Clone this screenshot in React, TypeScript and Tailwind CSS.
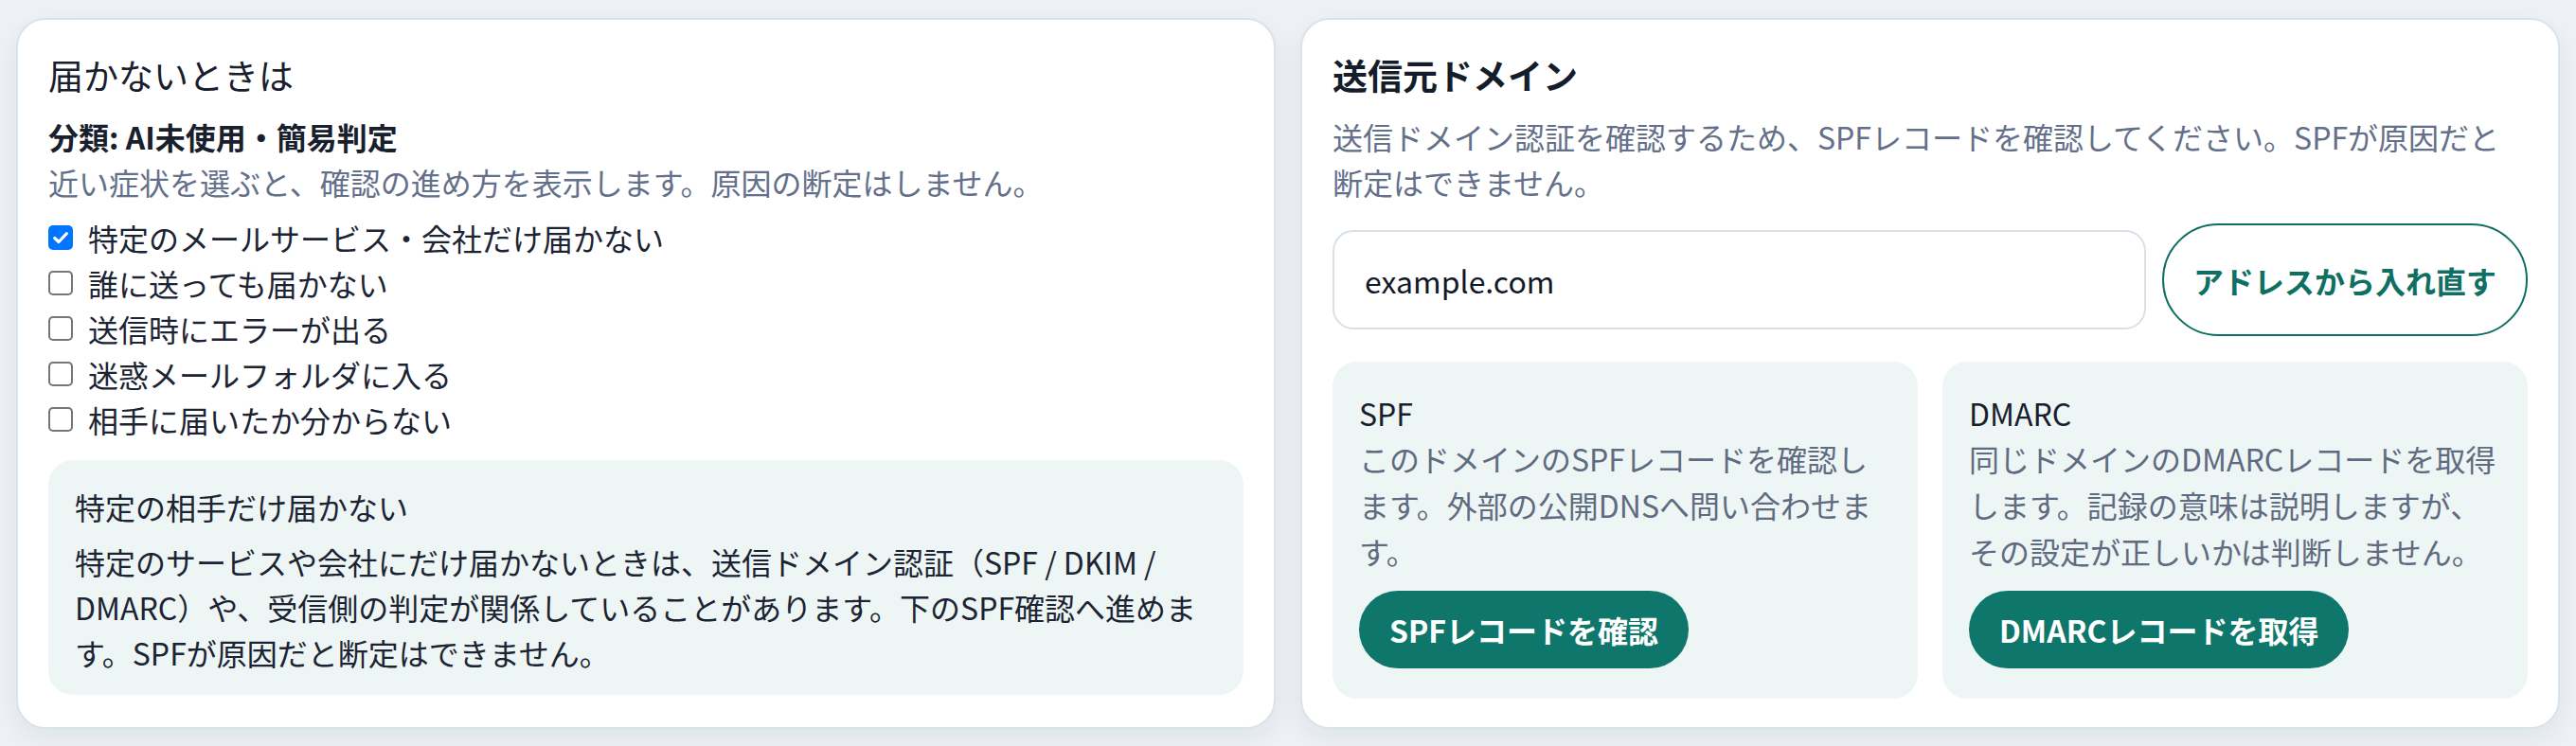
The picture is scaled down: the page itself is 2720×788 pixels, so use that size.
import React, { useState } from "react";

const FONT = { fontFamily: '"Noto Sans CJK JP", "Noto Sans", sans-serif' };

function Check({ label, checked, onToggle }: { label: string; checked: boolean; onToggle: () => void }) {
  return (
    <label className="flex h-[48px] cursor-pointer items-center gap-[16px]" onClick={onToggle}>
      {checked ? (
        <span className="flex h-[26px] w-[26px] flex-none items-center justify-center rounded-[5px] bg-[#0075ff]">
          <svg viewBox="0 0 16 16" className="h-[20px] w-[20px]" fill="none">
            <path d="M3 8.4 L6.4 11.6 L13 4.6" stroke="#ffffff" strokeWidth="2.6" strokeLinecap="round" strokeLinejoin="round" />
          </svg>
        </span>
      ) : (
        <span className="h-[26px] w-[26px] flex-none rounded-[5px] border-2 border-[#767676] bg-white" />
      )}
      <span className="text-[32px] leading-[48px] text-[#1c2433]">{label}</span>
    </label>
  );
}

export default function App() {
  const items = [
    "特定のメールサービス・会社だけ届かない",
    "誰に送っても届かない",
    "送信時にエラーが出る",
    "迷惑メールフォルダに入る",
    "相手に届いたか分からない",
  ];
  const [checked, setChecked] = useState<boolean[]>([true, false, false, false, false]);
  const [domain, setDomain] = useState("example.com");

  return (
    <div className="min-h-[788px] bg-[#eef2f6]" style={FONT}>
      <div className="grid grid-cols-2 items-stretch gap-[26px] px-[17px] pt-[19px]">
        {/* Left card */}
        <section className="rounded-[31px] border-2 border-[#d9e3eb] bg-white px-[32px] pb-[32px] pt-[32px] shadow-[0_10px_30px_rgba(15,23,42,0.07)]">
          <h2 className="text-[37px] font-normal leading-[52px] text-[#18202e]">届かないときは</h2>
          <p className="mt-[15px] text-[32px] font-bold leading-[48px] text-[#18202e]">分類: AI未使用・簡易判定</p>
          <p className="text-[32px] leading-[48px] text-[#64708a]">
            近い症状を選ぶと、確認の進め方を表示します。原因の断定はしません。
          </p>
          <div className="mt-[11px] flex flex-col">
            {items.map((it, i) => (
              <Check
                key={it}
                label={it}
                checked={checked[i]}
                onToggle={() => setChecked((c) => c.map((v, j) => (j === i ? !v : v)))}
              />
            ))}
          </div>
          <div className="mt-[19px] rounded-[26px] bg-[#eef6f5] px-[28px] pb-[21px] pt-[25px]">
            <p className="text-[32px] leading-[48px] text-[#1c2433]">特定の相手だけ届かない</p>
            <p className="mt-[10px] text-[32px] leading-[48px] text-[#1c2433]">
              特定のサービスや会社にだけ届かないときは、送信ドメイン認証（SPF / DKIM / DMARC）や、受信側の判定が関係していることがあります。下のSPF確認へ進めます。SPFが原因だと断定はできません。
            </p>
          </div>
        </section>

        {/* Right card */}
        <section className="rounded-[31px] border-2 border-[#d9e3eb] bg-white px-[32px] pb-[30px] pt-[32px] shadow-[0_10px_30px_rgba(15,23,42,0.07)]">
          <h2 className="text-[37px] font-bold leading-[52px] text-[#151c2a]">送信元ドメイン</h2>
          <p className="mt-[15px] max-w-[1245px] text-[32px] leading-[48px] text-[#64708a]">
            送信ドメイン認証を確認するため、SPFレコードを確認してください。SPFが原因だと断定はできません。
          </p>
          <div className="mt-[20px] flex items-center gap-[17px]">
            <input
              value={domain}
              onChange={(e) => setDomain(e.target.value)}
              className="h-[105px] min-w-0 flex-1 rounded-[22px] border-2 border-[#d6e1ea] bg-white px-[32px] text-[32px] text-[#111827] outline-none"
              style={FONT}
            />
            <button
              className="h-[119px] flex-none rounded-full border-2 border-[#0f6f63] bg-white px-[31px] text-[32px] font-bold text-[#0f6f63]"
              style={FONT}
            >
              アドレスから入れ直す
            </button>
          </div>
          <div className="mt-[27px] grid grid-cols-2 gap-[26px]">
            <div className="flex flex-col items-start rounded-[26px] bg-[#eef6f5] px-[28px] pb-[32px] pt-[30px]">
              <p className="text-[32px] leading-[48px] text-[#18202e]">SPF</p>
              <p className="text-[32px] leading-[49px] text-[#5f6b80]">
                このドメインのSPFレコードを確認します。外部の公開DNSへ問い合わせます。
              </p>
              <button
                className="mt-[17px] h-[82px] rounded-full bg-[#0f766b] px-[32px] text-[32px] font-bold text-white"
                style={FONT}
              >
                SPFレコードを確認
              </button>
            </div>
            <div className="flex flex-col items-start rounded-[26px] bg-[#eef6f5] px-[28px] pb-[32px] pt-[30px]">
              <p className="text-[32px] leading-[48px] text-[#18202e]">DMARC</p>
              <p className="text-[32px] leading-[49px] text-[#5f6b80]">
                同じドメインのDMARCレコードを取得します。記録の意味は説明しますが、その設定が正しいかは判断しません。
              </p>
              <button
                className="mt-[17px] h-[82px] rounded-full bg-[#0f766b] px-[32px] text-[32px] font-bold text-white"
                style={FONT}
              >
                DMARCレコードを取得
              </button>
            </div>
          </div>
        </section>
      </div>
    </div>
  );
}
